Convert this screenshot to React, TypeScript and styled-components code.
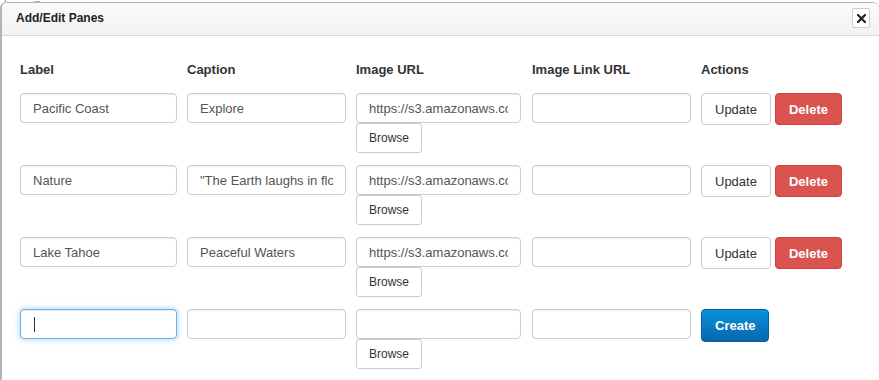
import React from 'react'
import styled, { createGlobalStyle } from 'styled-components'

const GlobalStyle = createGlobalStyle`
  html, body {
    margin: 0;
    padding: 0;
    background: #ffffff;
    font-family: "Liberation Sans", Arial, sans-serif;
  }
`

type Pane = {
  label: string
  caption: string
  image: string
  link: string
}

const panes: Pane[] = [
  { label: 'Pacific Coast', caption: 'Explore', image: 'https://s3.amazonaws.com/panes/pacific-coast.jpg', link: '' },
  { label: 'Nature', caption: '"The Earth laughs in flowers"', image: 'https://s3.amazonaws.com/panes/nature.jpg', link: '' },
  { label: 'Lake Tahoe', caption: 'Peaceful Waters', image: 'https://s3.amazonaws.com/panes/lake-tahoe.jpg', link: '' },
]

const App: React.FC = () => {
  return (
    <>
      <GlobalStyle />
      <Backdrop>
        <BackdropText>public_html</BackdropText>
      </Backdrop>
      <Dialog>
        <TitleBar>
          <Title>Add/Edit Panes</Title>
          <CloseButton aria-label="close">
            <svg width="9" height="9" viewBox="0 0 9 9">
              <path d="M1 1 L8 8 M8 1 L1 8" stroke="#222" strokeWidth="2.2" strokeLinecap="square" />
            </svg>
          </CloseButton>
        </TitleBar>
        <Body>
          <HeaderRow>
            <HeadCell>Label</HeadCell>
            <HeadCell>Caption</HeadCell>
            <HeadCell>Image URL</HeadCell>
            <HeadCell>Image Link URL</HeadCell>
            <HeadCell>Actions</HeadCell>
          </HeaderRow>

          {panes.map((p) => (
            <Row key={p.label}>
              <TextInput value={p.label} readOnly />
              <TextInput value={p.caption} readOnly />
              <ImageCell>
                <TextInput $width={165} value={p.image} readOnly />
                <BrowseButton>Browse</BrowseButton>
              </ImageCell>
              <TextInput value={p.link} readOnly />
              <Actions>
                <DefaultButton>Update</DefaultButton>
                <DangerButton>Delete</DangerButton>
              </Actions>
            </Row>
          ))}

          <Row>
            <FocusWrap>
              <TextInput $active value="" readOnly />
              <Caret />
            </FocusWrap>
            <TextInput value="" readOnly />
            <ImageCell>
              <TextInput $width={165} value="" readOnly />
              <BrowseButton>Browse</BrowseButton>
            </ImageCell>
            <TextInput value="" readOnly />
            <Actions>
              <PrimaryButton>Create</PrimaryButton>
            </Actions>
          </Row>
        </Body>
      </Dialog>
    </>
  )
}

const Backdrop = styled.div`
  height: 2px;
  overflow: hidden;
  padding-left: 4px;
`

const BackdropText = styled.div`
  font-family: "Liberation Serif", serif;
  font-size: 12px;
  line-height: 12px;
  margin-top: -10px;
  color: #999;
`

const Dialog = styled.div`
  border: 1px solid #b4b4b4;
  border-right: none;
  border-bottom: none;
  border-left-width: 2px;
  border-radius: 6px 6px 0 0;
  background: #ffffff;
  min-height: 378px;
  box-sizing: border-box;
`

const TitleBar = styled.div`
  display: flex;
  align-items: center;
  justify-content: space-between;
  height: 32px;
  padding: 0 9px 0 14px;
  background: linear-gradient(#fafafa, #f2f2f2);
  border-bottom: 1px solid #d8d8d8;
  border-radius: 6px 6px 0 0;
`

const Title = styled.div`
  font-size: 12px;
  font-weight: bold;
  color: #222;
  margin-top: -3px;
`

const CloseButton = styled.button`
  width: 18px;
  height: 20px;
  padding: 0;
  display: flex;
  align-items: center;
  justify-content: center;
  background: #ffffff;
  border: 1px solid #cfcfcf;
  border-radius: 2px;
  margin-top: -2px;
`

const Body = styled.div`
  padding: 25px 0 0 18px;
`

const columns = '157px 159px 166px 159px auto'

const HeaderRow = styled.div`
  display: grid;
  grid-template-columns: ${columns};
  column-gap: 10px;
  margin-bottom: 14px;
`

const HeadCell = styled.div`
  font-size: 13px;
  font-weight: bold;
  line-height: 18px;
  color: #333;
`

const Row = styled.div`
  display: grid;
  grid-template-columns: ${columns};
  column-gap: 10px;
  align-items: start;
  margin-bottom: 12px;
`

const TextInput = styled.input<{ $width?: number; $active?: boolean }>`
  box-sizing: border-box;
  width: ${(p) => (p.$width ? `${p.$width}px` : '100%')};
  height: 30px;
  padding: 0 12px;
  font-family: "Liberation Sans", Arial, sans-serif;
  font-size: 13px;
  color: #555;
  background: #fff;
  border: 1px solid ${(p) => (p.$active ? '#66afe9' : '#cccccc')};
  border-radius: 4px;
  box-shadow: ${(p) =>
    p.$active
      ? 'inset 0 1px 1px rgba(0,0,0,.075), 0 0 6px rgba(102,175,233,.6)'
      : 'inset 0 1px 1px rgba(0,0,0,.075)'};
  outline: none;
`

const FocusWrap = styled.div`
  position: relative;
`

const Caret = styled.span`
  position: absolute;
  left: 14px;
  top: 8px;
  width: 1px;
  height: 15px;
  background: #333;
`

const ImageCell = styled.div`
  display: flex;
  flex-direction: column;
  align-items: flex-start;
`

const BrowseButton = styled.button`
  box-sizing: border-box;
  height: 30px;
  padding: 0 12px;
  font-family: "Liberation Sans", Arial, sans-serif;
  font-size: 12px;
  color: #333;
  background: #fff;
  border: 1px solid #cccccc;
  border-radius: 3px;
`

const Actions = styled.div`
  display: flex;
  gap: 4px;
`

const BaseButton = styled.button`
  box-sizing: border-box;
  height: 32px;
  padding: 0 13px;
  font-family: "Liberation Sans", Arial, sans-serif;
  font-size: 13px;
  border-radius: 4px;
  cursor: pointer;
`

const DefaultButton = styled(BaseButton)`
  color: #333;
  background: #fff;
  border: 1px solid #cccccc;
`

const DangerButton = styled(BaseButton)`
  color: #fff;
  font-weight: bold;
  background: #d9534f;
  border: 1px solid #d43f3a;
`

const PrimaryButton = styled(BaseButton)`
  height: 33px;
  color: #fff;
  font-weight: bold;
  background: linear-gradient(#0c92da, #0567ad);
  border: 1px solid #0560a0;
`

export default App
